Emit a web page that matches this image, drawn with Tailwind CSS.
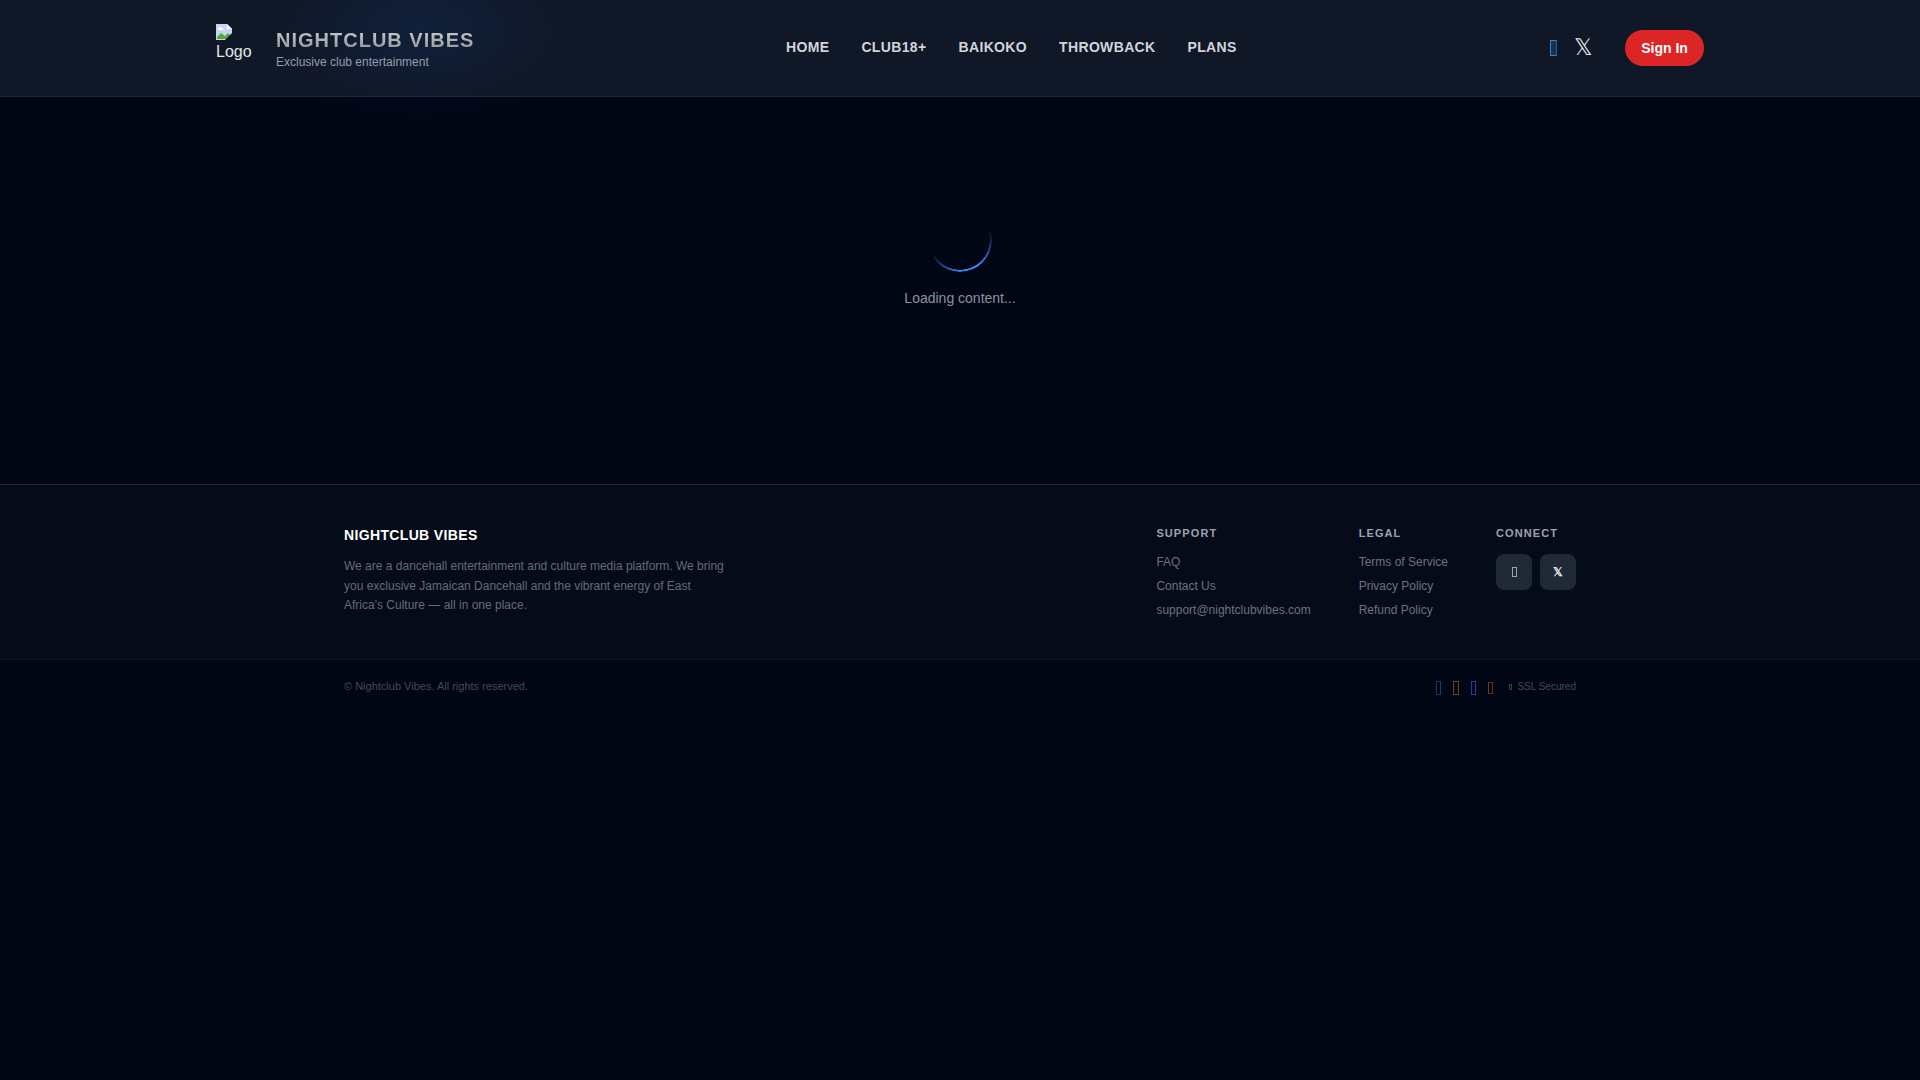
<!DOCTYPE html>
<html lang="en">
<head>
<meta charset="utf-8">
<title>Nightclub Vibes</title>
<script src="https://cdn.jsdelivr.net/npm/@tailwindcss/browser@4"></script>
</head>
<body class="bg-[#010614] font-['Liberation_Sans',sans-serif] min-h-screen">
<header class="relative h-[97px] overflow-hidden border-b border-[#1f2937] bg-[#101726]">
  <div class="absolute left-[270px] top-[-50px] h-[160px] w-[300px] bg-[radial-gradient(closest-side,#10203a_0%,#101b30_55%,#10172600_100%)]"></div>
  <div class="relative mx-auto flex h-full max-w-[1536px] items-center px-6">
    <div class="flex w-[570px] shrink-0 items-center gap-6">
      <div class="h-12 w-[36px] text-[16px] leading-[18px] text-[#e5e7eb]">
        <svg class="block" width="16" height="16" viewBox="0 0 16 16"><path d="M0 0h11l5 5v11H0z" fill="#c3d7f5"/><path d="M11 0v5h5z" fill="#fff"/><path d="M1 13l4-4 4 3 3-3 3 3v3H1z" fill="#5aa63c"/><path d="M2 5c1-2 3-2 4-1 1 0 2 1 1 2H2z" fill="#fff"/><path d="M9 16l7-7v7z" fill="#101726"/></svg>
        <span class="block pt-[3px]">Logo</span>
      </div>
      <div class="flex flex-col">
        <span class="bg-[linear-gradient(180deg,#d1d5db,#8b8b8b)] bg-clip-text text-[20px] leading-[28px] font-bold tracking-wider text-transparent">NIGHTCLUB VIBES</span>
        <span class="text-[12px] leading-[16px] text-[#959cab]">Exclusive club entertainment</span>
      </div>
    </div>
    <nav class="flex gap-8 pb-[3px] text-[14px] leading-5 font-bold tracking-wide text-[#d1d5db]">
      <span>HOME</span><span>CLUB18+</span><span>BAIKOKO</span><span>THROWBACK</span><span>PLANS</span>
    </nav>
    <div class="ml-auto flex items-center">
      <span class="block h-4 w-[7px] border border-[#3b82c4] border-r-[#2a5a90] bg-[#1b3050]"></span>
      <span class="ml-[17px] w-[18px] pb-[1px] text-[23px] leading-none text-[#e5e7eb]">&#x1D54F;</span>
      <span class="ml-[33px] flex h-9 w-[79px] items-center justify-center rounded-full bg-[#dc2626] text-[14px] font-bold text-white">Sign In</span>
    </div>
  </div>
</header>
<main class="flex h-[387px] flex-col items-center bg-[radial-gradient(ellipse_150px_40px_at_420px_0,#020819,transparent)] pt-[111px]">
  <div class="h-16 w-16 rounded-full bg-[conic-gradient(transparent_69deg,#3b82f6_145deg,#3b82f6_180deg,transparent_245deg)] [mask:radial-gradient(closest-side,transparent_calc(100%-2.5px),black_calc(100%-2px))]"></div>
  <p class="mt-4 text-[14px] leading-5 text-[#8b92a0]">Loading content...</p>
</main>
<footer>
  <div class="h-[175px] border-t border-[#1f2937] bg-[#050b18]">
    <div class="mx-auto flex max-w-7xl justify-between px-6 pt-[40px]">
      <div class="w-[384px]">
        <h2 class="text-[14px] leading-5 font-bold tracking-wide text-white">NIGHTCLUB VIBES</h2>
        <p class="mt-3 text-[12px] leading-[19.5px] text-[#646b78]">We are a dancehall entertainment and culture media platform. We bring you exclusive Jamaican Dancehall and the vibrant energy of East Africa's Culture — all in one place.</p>
      </div>
      <div class="flex gap-12">
        <div>
          <h3 class="text-[11px] leading-[16px] font-bold tracking-[1.1px] text-[#9ca3af]">SUPPORT</h3>
          <ul class="mt-[13px] flex flex-col gap-2 text-[12px] leading-4 text-[#6b7280]">
            <li>FAQ</li><li>Contact Us</li><li>support@nightclubvibes.com</li>
          </ul>
        </div>
        <div>
          <h3 class="text-[11px] leading-[16px] font-bold tracking-[1.1px] text-[#9ca3af]">LEGAL</h3>
          <ul class="mt-[13px] flex flex-col gap-2 text-[12px] leading-4 text-[#6b7280]">
            <li>Terms of Service</li><li>Privacy Policy</li><li>Refund Policy</li>
          </ul>
        </div>
        <div class="w-[80px]">
          <h3 class="whitespace-nowrap text-[11px] leading-[16px] font-bold tracking-[1.1px] text-[#9ca3af]">CONNECT</h3>
          <div class="mt-[13px] flex gap-2">
            <span class="flex h-9 w-9 items-center justify-center rounded-lg bg-[#1f2937]"><span class="block h-[10px] w-[5px] border border-[#9ca3af]"></span></span>
            <span class="flex h-9 w-9 items-center justify-center rounded-lg bg-[#1f2937] text-[12px] font-bold text-[#e5e7eb]">&#x1D54F;</span>
          </div>
        </div>
      </div>
    </div>
  </div>
  <div class="border-t border-[#0d131f]">
    <div class="mx-auto flex max-w-7xl items-center justify-between px-6 pt-[18px]">
      <span class="self-start text-[11px] leading-4 text-[#434a57]">© Nightclub Vibes. All rights reserved.</span>
      <div class="flex items-center text-[10px] leading-4 text-[#434a57]">
        <div class="flex items-center gap-[12px] pt-[2px]">
          <span class="block h-[14px] w-[5px] border border-[#1e3a6e]"></span>
          <span class="block h-[14px] w-[6px] border border-[#7c3f1d]"></span>
          <span class="block h-[14px] w-[5px] border border-[#1e40af]"></span>
          <span class="block h-[12px] w-[5px] border border-[#7c2d12]"></span>
        </div>
        <span class="ml-[16px] block h-[6px] w-[3px] border border-[#14532d]"></span>
        <span class="ml-[5px] pt-[1px]">SSL Secured</span>
      </div>
    </div>
  </div>
</footer>
</body>
</html>
